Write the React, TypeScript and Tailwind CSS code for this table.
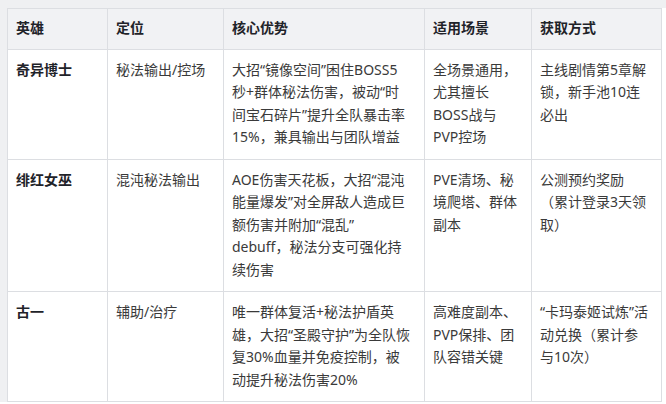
import React from 'react';

interface Hero {
  name: string;
  role: string;
  strength: string[];
  scene: string[];
  source: string[];
}

// lines are split the same way the original table wraps them
const heroes: Hero[] = [
  {
    name: '奇异博士',
    role: '秘法输出/控场',
    strength: ['大招“镜像空间”困住BOSS5', '秒+群体秘法伤害，被动“时', '间宝石碎片”提升全队暴击率', '15%，兼具输出与团队增益'],
    scene: ['全场景通用，', '尤其擅长', 'BOSS战与', 'PVP控场'],
    source: ['主线剧情第5章解', '锁，新手池10连', '必出'],
  },
  {
    name: '绯红女巫',
    role: '混沌秘法输出',
    strength: ['AOE伤害天花板，大招“混沌', '能量爆发”对全屏敌人造成巨', '额伤害并附加“混乱”', 'debuff，秘法分支可强化持', '续伤害'],
    scene: ['PVE清场、秘', '境爬塔、群体', '副本'],
    source: ['公测预约奖励', '（累计登录3天领', '取）'],
  },
  {
    name: '古一',
    role: '辅助/治疗',
    strength: ['唯一群体复活+秘法护盾英', '雄，大招“圣殿守护”为全队恢', '复30%血量并免疫控制，被', '动提升秘法伤害20%'],
    scene: ['高难度副本、', 'PVP保排、团', '队容错关键'],
    source: ['“卡玛泰姬试炼”活', '动兑换（累计参', '与10次）'],
  },
];

const headers = ['英雄', '定位', '核心优势', '适用场景', '获取方式'];

function Lines({ lines }: { lines: string[] }) {
  return (
    <>
      {lines.map((l, i) => (
        <div key={i} className="whitespace-nowrap">
          {l}
        </div>
      ))}
    </>
  );
}

export default function App() {
  return (
    <div
      className="w-[666px] h-[404px] overflow-hidden bg-white flex flex-col"
      style={{ fontFamily: '"Noto Sans", "Noto Sans CJK SC", sans-serif' }}
    >
      {/* top strip */}
      <div className="h-[8px] shrink-0 bg-[#eff0f2]"></div>
      <div className="flex">
        {/* left strip */}
        <div className="w-[7px] shrink-0 bg-[#eff0f2]"></div>
        <table className="table-fixed border-collapse w-[654px] text-[14px] leading-[22.5px]">
          <colgroup>
            <col className="w-[100px]" />
            <col className="w-[116px]" />
            <col className="w-[201px]" />
            <col className="w-[107px]" />
            <col className="w-[130px]" />
          </colgroup>
          <thead>
            <tr className="bg-[#f1f2f4]">
              {headers.map((h) => (
                <th
                  key={h}
                  className="border border-[#dcdee2] px-2 pt-2 pb-[9px] text-left font-bold text-[#1f2329]"
                >
                  {h}
                </th>
              ))}
            </tr>
          </thead>
          <tbody>
            {heroes.map((hero) => (
              <tr key={hero.name} className="align-top">
                <td className="border border-[#dcdee2] px-2 pt-[9px] pb-[10px] font-bold text-[#1f2329]">
                  {hero.name}
                </td>
                <td className="border border-[#dcdee2] px-2 pt-[9px] pb-[10px] text-[#3a3a3a]">{hero.role}</td>
                <td className="border border-[#dcdee2] px-2 pt-[9px] pb-[10px] text-[#3a3a3a]">
                  <Lines lines={hero.strength} />
                </td>
                <td className="border border-[#dcdee2] px-2 pt-[9px] pb-[10px] text-[#3a3a3a]">
                  <Lines lines={hero.scene} />
                </td>
                <td className="border border-[#dcdee2] px-2 pt-[9px] pb-[10px] text-[#3a3a3a]">
                  <Lines lines={hero.source} />
                </td>
              </tr>
            ))}
          </tbody>
        </table>
      </div>
    </div>
  );
}
